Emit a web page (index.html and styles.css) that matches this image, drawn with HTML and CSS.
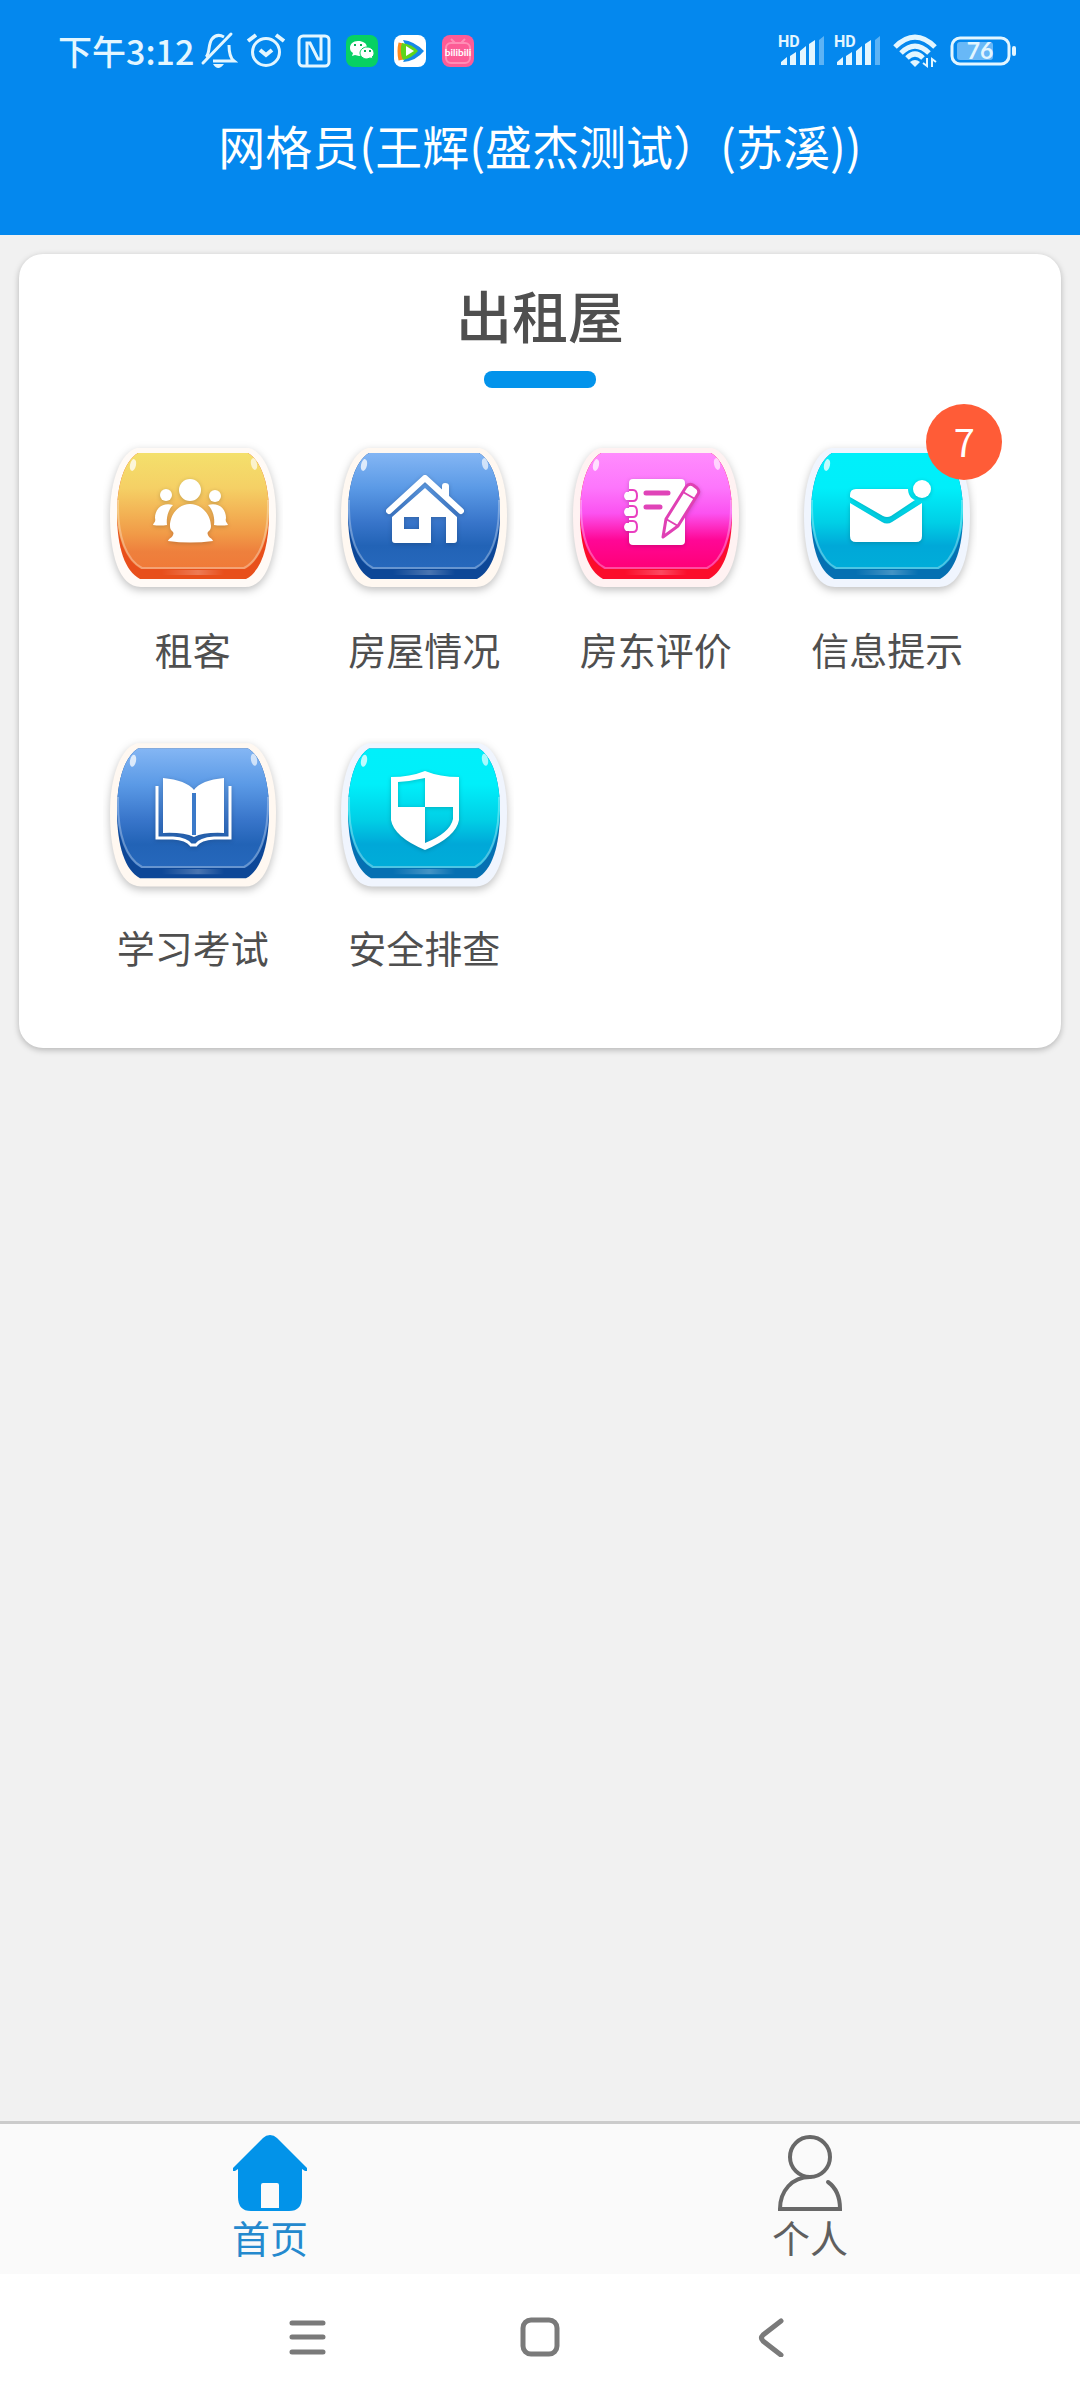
FILE: index.html
```html
<!DOCTYPE html>
<html lang="zh-CN">
  <head>
    <meta charset="UTF-8" />
    <meta name="viewport" content="width=device-width, initial-scale=1.0" />
    <title>网格员</title>
    <link rel="stylesheet" href="styles.css" />
  </head>
  <body>
    <!-- shared tile shape: fill = face gradient, color = lower rim -->
    <svg class="defs" width="0" height="0" aria-hidden="true">
      <defs>
        <linearGradient id="orange" x1="0" y1="0" x2="0" y2="1">
          <stop offset="0" stop-color="#f4e06c" />
          <stop offset="0.3" stop-color="#f5d065" />
          <stop offset="0.7" stop-color="#f19a47" />
          <stop offset="0.85" stop-color="#ee803d" />
          <stop offset="1" stop-color="#f07a38" />
        </linearGradient>
        <linearGradient id="blue" x1="0" y1="0" x2="0" y2="1">
          <stop offset="0" stop-color="#84b6f4" />
          <stop offset="0.3" stop-color="#5b9ae6" />
          <stop offset="0.6" stop-color="#3875ca" />
          <stop offset="0.8" stop-color="#2263b6" />
          <stop offset="1" stop-color="#2668bc" />
        </linearGradient>
        <linearGradient id="pink" x1="0" y1="0" x2="0" y2="1">
          <stop offset="0" stop-color="#ff8cfd" />
          <stop offset="0.3" stop-color="#fd76fc" />
          <stop offset="0.52" stop-color="#fb52f0" />
          <stop offset="0.75" stop-color="#ff0796" />
          <stop offset="1" stop-color="#ff0076" />
        </linearGradient>
        <linearGradient id="cyan" x1="0" y1="0" x2="0" y2="1">
          <stop offset="0" stop-color="#00f0fa" />
          <stop offset="0.3" stop-color="#00effa" />
          <stop offset="0.6" stop-color="#00cfe6" />
          <stop offset="0.8" stop-color="#00a8d8" />
          <stop offset="1" stop-color="#00add9" />
        </linearGradient>
        <linearGradient id="glint" x1="0" y1="0" x2="1" y2="0">
          <stop offset="0.2" stop-color="#fff" stop-opacity="0" />
          <stop offset="0.55" stop-color="#fff" stop-opacity="0.25" />
          <stop offset="0.8" stop-color="#fff" stop-opacity="0" />
        </linearGradient>
        <symbol id="tile" viewBox="0 0 180 160" preserveAspectRatio="none" overflow="visible">
          <path class="tile-plate" d="M34 8H146C162 12 173 40 173 75C173 112 165 147 142 147H38C15 147 7 112 7 75C7 40 18 12 34 8Z" />
          <path fill="currentColor" d="M35 13H145C160 22 166 48 166 73C166 108 158 131 143 139H37C22 131 14 108 14 73C14 48 20 22 35 13Z" />
          <path fill="url(#glint)" d="M38 130H142V135H38Z" />
          <path d="M35 13H145C160 22 166 48 166 73C166 98 157 121 142 129H38C23 121 14 98 14 73C14 48 20 22 35 13Z" />
          <path fill="none" stroke="#fff" stroke-opacity="0.3" stroke-width="2" d="M15 60C14 98 24 120 39 128H141C156 120 166 98 165 60" />
          <ellipse cx="30" cy="25" rx="3" ry="6" fill="#fff" fill-opacity="0.75" transform="rotate(12 30 25)" />
          <ellipse cx="151" cy="24" rx="3" ry="6" fill="#fff" fill-opacity="0.65" transform="rotate(-12 151 24)" />
        </symbol>
      </defs>
    </svg>

    <header class="header">
      <div class="status">
        <span class="time">下午3:12</span>
        <div class="status-left">
          <svg width="40" height="40" viewBox="0 0 40 40" fill="none" stroke="#e3f6ff" stroke-width="3">
            <path d="M8 26C12 23 10 13 14 8Q19 2 26 6M31 14C31 22 32 27 36 30H15" />
            <path d="M33 3L5 32" stroke-linecap="round" />
            <path d="M15 33H26Q20 41 15 33Z" fill="#e3f6ff" stroke="none" />
          </svg>
          <svg width="40" height="40" viewBox="0 0 40 40" fill="none" stroke="#e3f6ff" stroke-width="3">
            <circle cx="20" cy="21" r="13.5" />
            <path d="M2 10L10 4M38 10L30 4M14 19L20 24L26 19" stroke-width="4" />
          </svg>
          <svg width="40" height="40" viewBox="0 0 40 40" fill="none" stroke="#e3f6ff" stroke-width="3">
            <rect x="5" y="5" width="30" height="30" rx="4" />
            <path d="M13 35V12H16L24 28H27V6" />
          </svg>
          <svg width="40" height="40" viewBox="0 0 40 40">
            <rect x="4" y="4" width="32" height="32" rx="8" fill="#07d163" />
            <path d="M16 10c-5 0-8 3-8 7 0 2 1 4 3 5l-1 3 3-1 4 1c4 0 8-3 8-8s-4-7-9-7z" fill="#fff" />
            <path d="M25 16c-4 0-7 3-7 6s3 6 7 6l3-1 3 1-1-2c2-1 2-3 2-4 0-3-3-6-7-6z" fill="#fff" stroke="#07d163" />
            <path d="M12 14h2M18 14h2M22 20h2M27 20h2" stroke="#07b155" stroke-width="2" />
          </svg>
          <svg width="40" height="40" viewBox="0 0 40 40">
            <rect x="4" y="4" width="32" height="32" rx="8" fill="#fff" />
            <path d="M11 12Q9 20 11 29" stroke="#ff8a1c" stroke-width="5" fill="none" />
            <path d="M13 9Q24 10 34 20Q26 30 13 31Q20 20 13 9Z" fill="#1688e8" />
            <path d="M12 12Q22 13 28 20Q22 27 13 29Q9 20 12 12Z" fill="#5fd51b" />
            <path d="M16 15L24 20L16 25Z" fill="#fff" />
          </svg>
          <svg width="40" height="40" viewBox="0 0 40 40">
            <rect x="4" y="4" width="32" height="32" rx="8" fill="#fd5c96" />
            <rect x="8" y="12" width="24" height="20" rx="5" fill="none" stroke="#ff8db5" stroke-width="2" />
            <path d="M13 8L17 12M27 8L23 12" stroke="#ff8db5" stroke-width="2" />
            <text class="bili" x="20" y="25" text-anchor="middle">bilibili</text>
          </svg>
        </div>
        <div class="status-right">
          <svg width="46" height="40" viewBox="0 0 46 40" fill="#e3f6ff">
            <text class="hd" x="0" y="16">HD</text>
            <path d="M3 34V31L9 26V34ZM12 34V25L18 21V34ZM22 34V20L28 15V34ZM31 34V13L37 9V34Z" />
            <path d="M41 34V9L46 5V34Z" opacity="0.4" />
          </svg>
          <svg width="46" height="40" viewBox="0 0 46 40" fill="#e3f6ff">
            <text class="hd" x="0" y="16">HD</text>
            <path d="M3 34V31L9 26V34ZM12 34V25L18 21V34ZM22 34V20L28 15V34ZM31 34V13L37 9V34Z" />
            <path d="M41 34V9L46 5V34Z" opacity="0.4" />
          </svg>
          <svg width="50" height="40" viewBox="0 0 50 40" fill="none" stroke="#e3f6ff" stroke-width="5">
            <path d="M5 16Q25 -4 45 16M11 22Q25 8 39 22M17 27Q25 19 33 27" />
            <path d="M20 31Q25 27 30 31L25 36Z" fill="#e3f6ff" stroke="none" />
            <path d="M37 27V35L33 32M42 36V28L46 31" stroke-width="2" />
          </svg>
          <svg width="68" height="40" viewBox="0 0 68 40" fill="none">
            <rect x="2" y="7" width="57" height="26" rx="8" stroke="#e3f6ff" stroke-width="3" />
            <rect x="7" y="11" width="36" height="18" rx="3" fill="#68b8f7" />
            <rect x="62" y="15" width="4" height="10" rx="2" fill="#e3f6ff" />
            <text class="battery" x="30" y="28" text-anchor="middle">76</text>
          </svg>
        </div>
      </div>
      <h1 class="title">网格员(王辉(盛杰测试）(苏溪))</h1>
    </header>

    <main class="main">
      <section class="card">
        <h2 class="card-title">出租屋</h2>
        <ul class="grid">
          <li>
            <a class="item" href="#">
              <span class="icon">
                <svg width="180" height="160" viewBox="0 0 180 160">
                  <use href="#tile" width="180" height="160" fill="url(#orange)" color="#e84f1b" />
                  <g class="glyph">
                    <circle cx="87" cy="50" r="11" />
                    <circle cx="63" cy="55" r="6" />
                    <circle cx="112" cy="56" r="6" />
                    <path d="M87 64C75 64 67 75 67 86C67 92 72 91 70 95C69 98 66 98 65 101Q87 104 110 101C109 98 106 98 105 95C103 91 108 92 108 86C108 75 99 64 87 64Z" />
                    <path d="M70 65C58 62 52 70 52 78C53 82 51 82 50 85Q57 86 64 85C63 78 65 70 70 65Z" />
                    <path d="M105 65C117 62 123 70 123 78C122 82 124 82 125 85Q118 86 111 85C112 78 110 70 105 65Z" />
                  </g>
                </svg>
              </span>
              <span class="label">租客</span>
            </a>
          </li>
          <li>
            <a class="item" href="#">
              <span class="icon">
                <svg class="cream" width="180" height="160" viewBox="0 0 180 160">
                  <use href="#tile" width="180" height="160" fill="url(#blue)" color="#0d4797" />
                  <g class="glyph">
                    <path d="M108 54V46Q108 43 111 43Q115 43 115 46V60Z" />
                    <path d="M55 71L91 38L127 71" fill="none" stroke="#fff" stroke-width="6" stroke-linecap="round" stroke-linejoin="round" />
                    <path fill-rule="evenodd" d="M91 48L123 77V100Q123 103 120 103H112V77H97V103H61Q58 103 58 100V77ZM70 77V89H85V77Z" />
                  </g>
                </svg>
              </span>
              <span class="label">房屋情况</span>
            </a>
          </li>
          <li>
            <a class="item" href="#">
              <span class="icon">
                <svg class="rose" width="180" height="160" viewBox="0 0 180 160">
                  <use href="#tile" width="180" height="160" fill="url(#pink)" color="#fb0d2b" />
                  <g class="glyph">
                    <rect x="63" y="39" width="56" height="66" rx="4" />
                    <g stroke="#e93fc0" stroke-width="2">
                      <path d="M63 50H67Q71 50 71 56Q71 61 67 61H63M63 66H67Q71 66 71 72Q71 77 67 77H63M63 81H67Q71 81 71 87Q71 92 67 92H63" />
                    </g>
                    <path d="M60 52H66Q69 56 66 60H60Q56 56 60 52ZM60 68H66Q69 72 66 76H60Q56 72 60 68ZM60 83H66Q69 87 66 91H60Q56 87 60 83Z" />
                    <path d="M80 53H102M80 67H94" stroke="#e044b8" stroke-width="5" stroke-linecap="round" />
                    <path d="M97 97L100 79L120 47Q123 43 127 45L131 48Q134 51 132 54L112 86Z" stroke="#e040b4" stroke-width="3" stroke-linejoin="round" />
                    <path d="M100 79L112 86M117 52L129 59" stroke="#e040b4" stroke-width="2" />
                  </g>
                </svg>
              </span>
              <span class="label">房东评价</span>
            </a>
          </li>
          <li>
            <a class="item" href="#">
              <span class="icon">
                <svg class="ice" width="180" height="160" viewBox="0 0 180 160">
                  <use href="#tile" width="180" height="160" fill="url(#cyan)" color="#0570b2" />
                  <g class="glyph">
                    <path d="M59 49H111C111 54 114 59 118 60L94 76Q90 78 86 76L53 57V55Q53 49 59 49Z" />
                    <path d="M53 63L85 82Q90 85 95 82L125 63V96Q125 102 119 102H59Q53 102 53 96Z" />
                    <circle cx="125" cy="49" r="9" />
                  </g>
                </svg>
                <span class="badge">7</span>
              </span>
              <span class="label">信息提示</span>
            </a>
          </li>
          <li>
            <a class="item" href="#">
              <span class="icon">
                <svg class="cream" width="180" height="160" viewBox="0 0 180 160">
                  <use href="#tile" y="-3" width="180" height="165" fill="url(#blue)" color="#0d4797" />
                  <g class="glyph">
                    <path d="M60 40Q83 42 91 52Q98 42 121 40V95Q101 94 91 99Q80 94 60 95Z" />
                    <path d="M91 55V97" stroke="#3b7ac9" stroke-width="4" />
                    <path d="M54 48V100H70Q84 101 88 107H93Q97 101 111 100H127V48" fill="none" stroke="#fff" stroke-width="3" />
                  </g>
                </svg>
              </span>
              <span class="label">学习考试</span>
            </a>
          </li>
          <li>
            <a class="item" href="#">
              <span class="icon">
                <svg class="ice" width="180" height="160" viewBox="0 0 180 160">
                  <use href="#tile" y="-3" width="180" height="165" fill="url(#cyan)" color="#0570b2" />
                  <g class="glyph">
                    <path fill-rule="evenodd" d="M91 33Q106 39 125 39V82Q122 99 91 112Q60 99 57 82V39Q76 39 91 33ZM91 40Q78 43 64 44V69H91ZM91 69V105Q116 95 119 81V69Z" />
                  </g>
                </svg>
              </span>
              <span class="label">安全排查</span>
            </a>
          </li>
        </ul>
      </section>
    </main>

    <nav class="tabbar">
      <a class="tab active" href="#">
        <svg width="76" height="76" viewBox="0 0 76 76">
          <path fill="#0293e9" fill-rule="evenodd" d="M38 0Q42 0 45 3L75 33V36H73L70 34V62Q70 76 57 76H19Q6 76 6 62V34L3 36H1V33L31 3Q34 0 38 0ZM31 48Q29 48 29 50V73H47V50Q47 48 45 48Z" />
        </svg>
        <span>首页</span>
      </a>
      <a class="tab" href="#">
        <svg width="76" height="76" viewBox="0 0 76 76" fill="none" stroke="#686868" stroke-width="4">
          <circle cx="38" cy="22" r="20" />
          <path d="M38 42C20 42 8 56 8 74H68C68 61 63 52 56 47" stroke-linecap="round" />
        </svg>
        <span>个人</span>
      </a>
    </nav>

    <footer class="sysnav">
      <button type="button" aria-label="菜单">
        <svg width="40" height="40" viewBox="0 0 40 40" fill="none" stroke="#7a7a7a" stroke-width="5" stroke-linecap="round">
          <path d="M4 6H35M4 20H35M4 35H35" />
        </svg>
      </button>
      <button type="button" aria-label="主屏幕">
        <svg width="40" height="40" viewBox="0 0 40 40" fill="none" stroke="#7a7a7a" stroke-width="5">
          <rect x="3" y="3" width="34" height="34" rx="8" />
        </svg>
      </button>
      <button type="button" aria-label="返回">
        <svg width="40" height="40" viewBox="0 0 40 40" fill="none" stroke="#7a7a7a" stroke-width="5" stroke-linecap="round">
          <path d="M29 4L11 18Q8 21 11 24L29 38" />
        </svg>
      </button>
    </footer>
  </body>
</html>
```
FILE: styles.css
```css
* {
  box-sizing: border-box;
}
body {
  margin: 0;
  min-height: 100vh;
  display: flex;
  flex-direction: column;
  font-family: "Noto Sans CJK SC", sans-serif;
  color: #4f4f4f;
  background-color: #f1f1f1;
}
a {
  color: inherit;
  text-decoration: none;
}
svg {
  display: block;
}
.defs {
  position: absolute;
}

/* header */
.header {
  padding-bottom: 47px;
  color: #fff;
  background-color: #0488ee;
}
.status {
  display: flex;
  align-items: center;
  height: 102px;
  padding: 0 62px 0 58px;
  color: #e3f6ff;
}
.time {
  font-size: 34px;
  font-weight: 500;
  line-height: 40px;
}
.status-left {
  display: flex;
  gap: 8px;
  margin-left: 4px;
}
.status-right {
  display: flex;
  gap: 10px;
  margin-left: auto;
}
.hd {
  font: bold 16px Roboto, sans-serif;
}
.battery {
  font: bold 23px Lato, sans-serif;
  fill: #e3f6ff;
}
.bili {
  font: bold 10px Lato, sans-serif;
  fill: #fff;
}
.title {
  margin: 0;
  font-size: 47px;
  font-weight: 400;
  line-height: 86px;
  text-align: center;
}

/* card */
.main {
  flex: 1;
  padding: 19px;
}
.card {
  padding: 20px 58px 74px;
  border-radius: 24px;
  background-color: #fff;
  box-shadow: 0 2px 6px rgba(0, 0, 0, 0.25);
}
.card-title {
  margin: 0;
  font-size: 56px;
  font-weight: 500;
  line-height: 80px;
  text-align: center;
}
.card-title::after {
  content: "";
  display: block;
  width: 112px;
  height: 17px;
  margin: 17px auto 0;
  border-radius: 8px;
  background-color: #0393eb;
}
.grid {
  display: grid;
  grid-template-columns: repeat(4, 1fr);
  row-gap: 62px;
  margin: 52px 0 0;
  padding: 0;
  list-style: none;
}
.item {
  display: flex;
  flex-direction: column;
  align-items: center;
  gap: 22px;
}
.icon {
  position: relative;
}
.tile-plate {
  fill: var(--plate, #fffaf6);
  filter: drop-shadow(0 3px 4px rgba(0, 0, 0, 0.25));
}
.cream {
  --plate: #fff8f1;
}
.rose {
  --plate: #fff2f2;
}
.ice {
  --plate: #f0f5fe;
}
.glyph {
  fill: #fff;
  filter: drop-shadow(0 1px 2px rgba(0, 0, 0, 0.2));
}
.label {
  font-size: 38px;
  line-height: 54px;
}
.badge {
  position: absolute;
  top: -36px;
  right: -25px;
  width: 76px;
  height: 76px;
  border-radius: 50%;
  font-size: 38px;
  line-height: 74px;
  text-align: center;
  color: #fff;
  background-color: #ff5c37;
}

/* bottom bars */
.tabbar {
  display: flex;
  border-top: 3px solid #cbcbcb;
  background-color: #fafafa;
}
.tab {
  flex: 1;
  display: flex;
  flex-direction: column;
  align-items: center;
  padding: 11px 0;
  font-size: 38px;
  line-height: 52px;
  color: #5f5f5f;
}
.tab.active {
  color: #2489ce;
}
.sysnav {
  display: flex;
  justify-content: center;
  gap: 160px;
  height: 126px;
  background-color: #fff;
}
.sysnav button {
  display: flex;
  align-items: center;
  justify-content: center;
  width: 72px;
  padding: 0;
  border: none;
  background: none;
}
```
